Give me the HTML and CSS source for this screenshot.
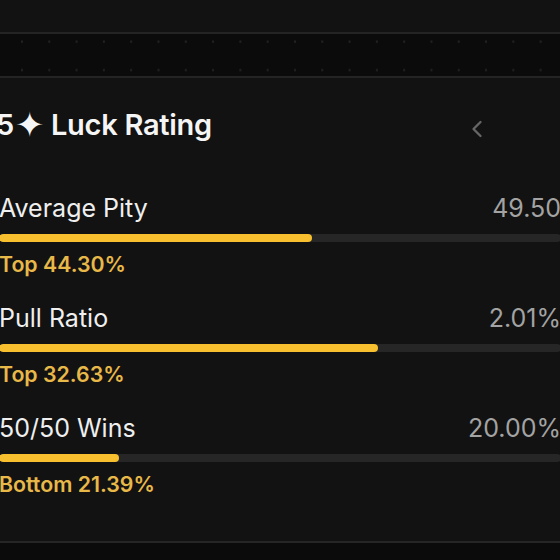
FILE: index.html
```html
<!DOCTYPE html>
<html lang="en">
<head>
<meta charset="utf-8">
<link rel="stylesheet" href="styles.css">
</head>
<body>
<div class="top"></div>
<div class="band"></div>
<section class="card">
  <div class="inner">
    <header class="head">
      <h2 class="title">5<span class="star">✦</span> Luck Rating</h2>
      <nav class="nav">
        <svg class="chev" width="28" height="28" viewBox="0 0 24 24" fill="none" stroke="currentColor" stroke-width="2" stroke-linecap="round" stroke-linejoin="round"><path d="m15 18-6-6 6-6"/></svg>
        <svg class="chev" width="28" height="28" viewBox="0 0 24 24" fill="none" stroke="currentColor" stroke-width="2" stroke-linecap="round" stroke-linejoin="round"><path d="m9 18 6-6-6-6"/></svg>
      </nav>
    </header>
    <div class="rows">
      <div class="row">
        <div class="row-head"><span class="label">Average Pity</span><span class="value">49.50</span></div>
        <div class="track"><div class="fill" style="width:55.7%"></div></div>
        <div class="rank">Top 44.30%</div>
      </div>
      <div class="row">
        <div class="row-head"><span class="label">Pull Ratio</span><span class="value">2.01%</span></div>
        <div class="track"><div class="fill" style="width:67.37%"></div></div>
        <div class="rank">Top 32.63%</div>
      </div>
      <div class="row">
        <div class="row-head"><span class="label">50/50 Wins</span><span class="value">20.00%</span></div>
        <div class="track"><div class="fill" style="width:21.39%"></div></div>
        <div class="rank">Bottom 21.39%</div>
      </div>
    </div>
  </div>
</section>
</body>
</html>
```
FILE: styles.css
```css
* { box-sizing: border-box; }
html, body {
  margin: 0;
  padding: 0;
}
body {
  width: 560px;
  height: 560px;
  overflow: hidden;
  background: #0b0b0b;
  font-family: Inter, "Noto Sans", "DejaVu Sans", sans-serif;
  color: #f2f2f2;
}
.top {
  height: 32px;
  background: #121212;
}
.band {
  height: 46px;
  border-top: 2px solid #242424;
  border-bottom: 2px solid #242424;
  background-color: #0b0b0b;
  background-image: radial-gradient(circle, #262626 0, #262626 0.8px, rgba(0,0,0,0) 1.4px);
  background-size: 27.3px 28.4px;
  background-position: 8.35px -6.5px;
}
.card {
  height: 465px;
  background: #121212;
  border-bottom: 2px solid #262626;
  overflow: hidden;
}
.inner {
  margin-left: -1px;
  width: 562px;
  padding-top: 29px;
}
.head {
  display: flex;
  align-items: flex-start;
  height: 36px;
}
.title {
  margin: 0 0 0 -3px;
  font-size: 29px;
  line-height: 36px;
  font-weight: 600;
  letter-spacing: -0.01em;
  color: #f5f5f5;
  white-space: nowrap;
}
.star {
  font-size: 35px;
  line-height: 30px;
  margin-left: 1px;
  vertical-align: -2px;
}
.nav {
  margin-left: auto;
  margin-right: -19px;
  display: flex;
  gap: 61px;
  color: #666666;
}
.chev {
  margin-top: 8px;
  display: block;
}
.rows {
  margin-top: 49px;
  display: flex;
  flex-direction: column;
  gap: 24px;
}
.row-head {
  display: flex;
  justify-content: space-between;
  font-size: 25px;
  line-height: 32px;
}
.label {
  color: #efefef;
  font-weight: 400;
}
.value {
  color: #a3a3a3;
}
.track {
  margin-top: 10px;
  height: 8px;
  border-radius: 4px;
  background: #262626;
  overflow: hidden;
}
.fill {
  height: 100%;
  border-radius: 4px;
  background: #f8bf2e;
}
.rank {
  margin-top: 8px;
  font-size: 21.3px;
  line-height: 28px;
  font-weight: 600;
  color: #e8b849;
}
```
